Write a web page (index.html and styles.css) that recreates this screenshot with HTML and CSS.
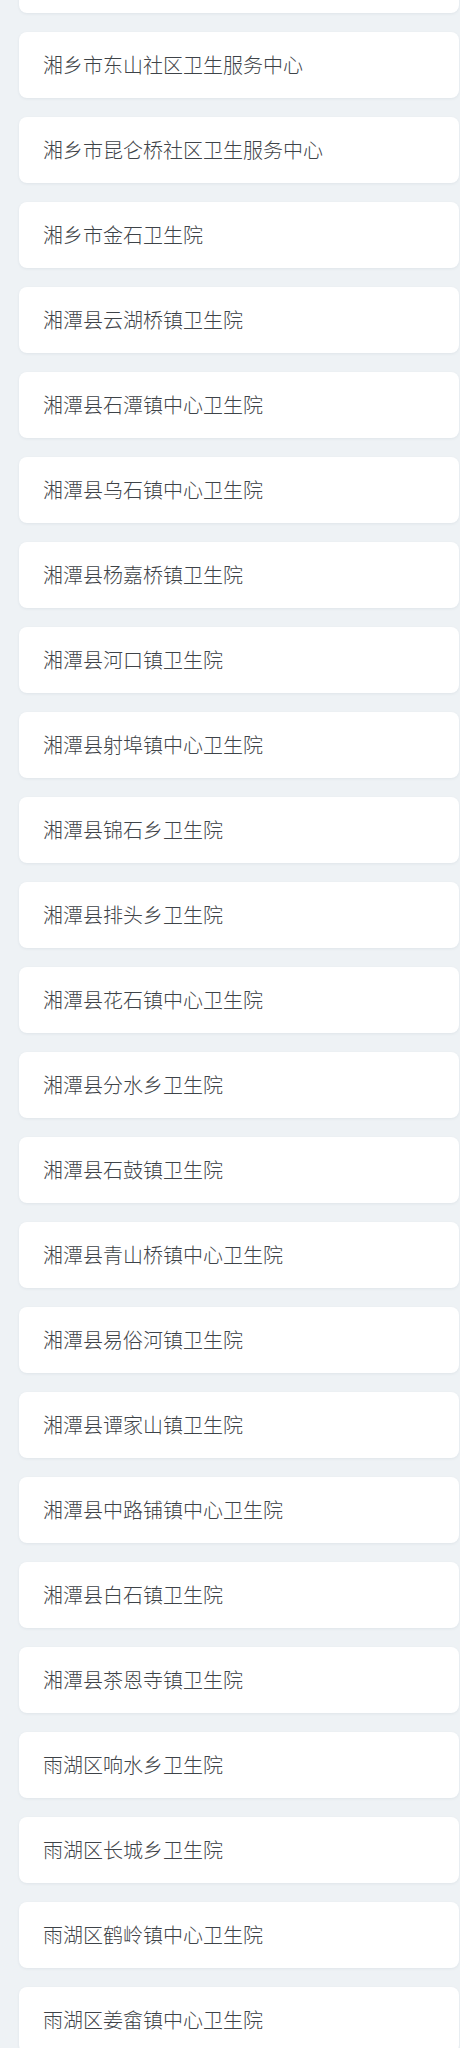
FILE: index.html
```html
<!DOCTYPE html>
<html lang="zh-CN">
<head>
<meta charset="utf-8">
<link rel="stylesheet" href="styles.css">
</head>
<body>
<ul class="list">
  <li class="card card-partial"></li>
  <li class="card">湘乡市东山社区卫生服务中心</li>
  <li class="card">湘乡市昆仑桥社区卫生服务中心</li>
  <li class="card">湘乡市金石卫生院</li>
  <li class="card">湘潭县云湖桥镇卫生院</li>
  <li class="card">湘潭县石潭镇中心卫生院</li>
  <li class="card">湘潭县乌石镇中心卫生院</li>
  <li class="card">湘潭县杨嘉桥镇卫生院</li>
  <li class="card">湘潭县河口镇卫生院</li>
  <li class="card">湘潭县射埠镇中心卫生院</li>
  <li class="card">湘潭县锦石乡卫生院</li>
  <li class="card">湘潭县排头乡卫生院</li>
  <li class="card">湘潭县花石镇中心卫生院</li>
  <li class="card">湘潭县分水乡卫生院</li>
  <li class="card">湘潭县石鼓镇卫生院</li>
  <li class="card">湘潭县青山桥镇中心卫生院</li>
  <li class="card">湘潭县易俗河镇卫生院</li>
  <li class="card">湘潭县谭家山镇卫生院</li>
  <li class="card">湘潭县中路铺镇中心卫生院</li>
  <li class="card">湘潭县白石镇卫生院</li>
  <li class="card">湘潭县茶恩寺镇卫生院</li>
  <li class="card">雨湖区响水乡卫生院</li>
  <li class="card">雨湖区长城乡卫生院</li>
  <li class="card">雨湖区鹤岭镇中心卫生院</li>
  <li class="card">雨湖区姜畲镇中心卫生院</li>
</ul>
</body>
</html>
```
FILE: styles.css
```css
html, body {
  margin: 0;
  padding: 0;
  background: #eef2f5;
}
body {
  font-family: "Noto Sans CJK SC", "Noto Sans", sans-serif;
  overflow: hidden;
}
.list {
  list-style: none;
  margin: 0;
  padding: 0 1px 40px 19px;
  display: flex;
  flex-direction: column;
  gap: 19px;
}
.card {
  box-sizing: border-box;
  height: 66px;
  display: flex;
  align-items: center;
  padding: 0 24px;
  background: #ffffff;
  border-radius: 8px;
  box-shadow: 0 1px 3px rgba(30, 50, 80, 0.07);
  font-size: 20px;
  font-weight: 300;
  color: #3e4348;
  line-height: 1;
}
.card-partial {
  margin-top: -53px;
}
```
